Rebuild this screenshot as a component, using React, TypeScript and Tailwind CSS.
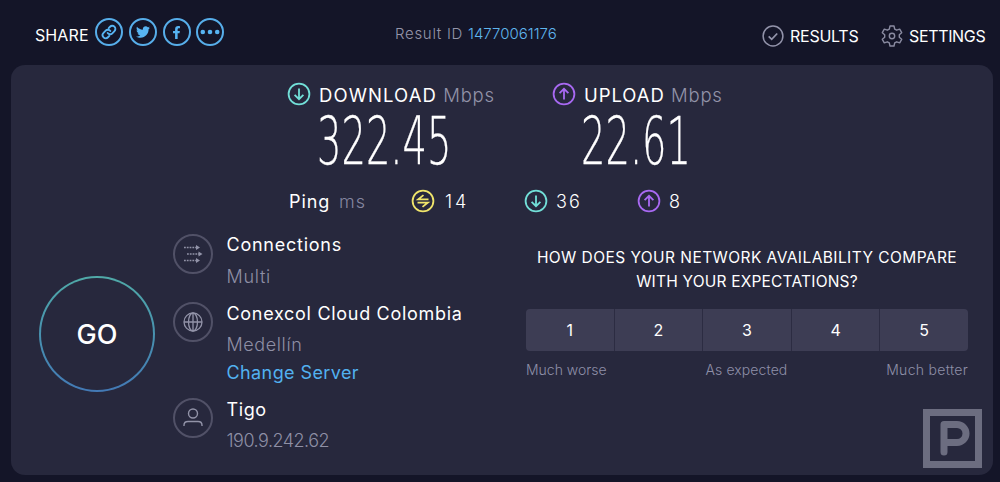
import React from 'react';
import { FaFacebookF, FaTwitter } from 'react-icons/fa';

const ratings = ['1', '2', '3', '4', '5'];

const ArrowBadge = ({ up, className }: { up?: boolean; className: string }) => (
  <svg className={`size-6 shrink-0 ${className}`} viewBox="0 0 24 24" fill="none" stroke="currentColor" strokeWidth="1.8">
    <circle cx="12" cy="12" r="10.4" />
    {up ? <path d="M12 17.5V7M7.6 11.2 12 6.8l4.4 4.4" /> : <path d="M12 6.5V17M7.6 12.8l4.4 4.4 4.4-4.4" />}
  </svg>
);

const PingBadge = () => (
  <svg className="size-6 shrink-0 text-[#f0e56b]" viewBox="0 0 24 24" fill="none" stroke="currentColor" strokeWidth="1.8">
    <circle cx="12" cy="12" r="10.4" />
    <path d="M17.5 10.3H7.2l5.3-4.2M6.5 13.7h10.3l-5.3 4.2" />
  </svg>
);

const ShareCircle = ({ children }: { children: React.ReactNode }) => (
  <a className="flex size-7 items-center justify-center rounded-full border-2 border-[#57aeea] text-[#57b4f2]">{children}</a>
);

const InfoCircle = ({ children }: { children: React.ReactNode }) => (
  <div className="flex size-10 shrink-0 items-center justify-center rounded-full border-2 border-[#515167] text-[#9293a8]">
    {children}
  </div>
);

const Header = () => (
  <header className="flex h-[65px] items-start whitespace-nowrap">
    <div className="flex w-[395px] pl-[35px]">
      <span className="mt-[23px] w-[60px] text-base leading-6 tracking-[0.1px]">SHARE</span>
      <div className="mt-[18px] flex gap-[5.8px]">
        <ShareCircle>
          <svg className="size-4 shrink-0" viewBox="0 0 24 24" fill="none" stroke="currentColor" strokeWidth="2.8" strokeLinecap="round">
            <path d="M10 13.5a4.6 4.6 0 0 0 7 .5l3.2-3.3a4.7 4.7 0 0 0-6.7-6.6l-2 2" />
            <path d="M14 10.5a4.6 4.6 0 0 0-7-.5l-3.2 3.3a4.7 4.7 0 0 0 6.7 6.6l2-2" />
          </svg>
        </ShareCircle>
        <ShareCircle>
          <FaTwitter className="size-[14px]" />
        </ShareCircle>
        <ShareCircle>
          <FaFacebookF className="size-[13px]" />
        </ShareCircle>
        <ShareCircle>
          <svg className="h-2 w-5 shrink-0" viewBox="0 0 20 8" fill="currentColor">
            <circle cx="2.8" cy="4" r="2.3" />
            <circle cx="10" cy="4" r="2.3" />
            <circle cx="17.2" cy="4" r="2.3" />
          </svg>
        </ShareCircle>
      </div>
    </div>
    <div className="mt-[22px] w-[367px] text-[15px] leading-6 font-light text-[#9495aa]">
      <span className="tracking-[0.7px]">Result ID </span>
      <span className="text-[#5fb5ee]">14770061176</span>
    </div>
    <div className="mt-6 flex w-[119px] items-center gap-[6px]">
      <svg className="size-[22px]" viewBox="0 0 22 22" fill="none" stroke="#9293aa" strokeWidth="1.5">
        <circle cx="11" cy="11" r="9.9" />
        <path d="m6.7 11.3 3 3 5.5-5.8" strokeWidth="1.8" />
      </svg>
      <span className="text-base leading-6 tracking-[-0.25px]">RESULTS</span>
    </div>
    <div className="mt-6 flex items-center gap-[6px]">
      <svg className="size-[22px]" viewBox="0 0 22 22" fill="none" stroke="#8a8ba1" strokeWidth="1.4" strokeLinejoin="round">
        <path d="M9 1h4l.7 3.1 2 1.1 3-1 2 3.5-2.4 2.1v2.4l2.4 2.1-2 3.5-3-1-2 1.1L13 21H9l-.7-3.1-2-1.1-3 1-2-3.5 2.4-2.1V9.8L1.3 7.7l2-3.5 3 1 2-1.1z" />
        <circle cx="11" cy="11" r="2.7" />
      </svg>
      <span className="text-base leading-6 tracking-[-0.35px]">SETTINGS</span>
    </div>
  </header>
);

const Speeds = () => (
  <>
    <div className="flex h-6 items-center pl-[276px] text-[18.5px] leading-6">
      <div className="flex w-[265px] items-center gap-2">
        <ArrowBadge className="text-[#72dfd8]" />
        <span className="pt-px tracking-[1.1px]">
          DOWNLOAD <span className="font-light tracking-[0.7px] text-[#9293a8]">Mbps</span>
        </span>
      </div>
      <div className="flex items-center gap-2">
        <ArrowBadge up className="text-[#a869f2]" />
        <span className="pt-px tracking-[0.95px]">
          UPLOAD <span className="font-light tracking-[0.8px] text-[#9293a8]">Mbps</span>
        </span>
      </div>
    </div>
    <div className="flex h-[69px] pt-[2px] pl-[306px] font-['DejaVu_Sans'] text-[66px] leading-[67px] font-extralight [-webkit-text-stroke:0.3px_white]">
      <div className="w-[264px]">
        <span className="block origin-left scale-x-[0.582]">322.45</span>
      </div>
      <div>
        <span className="block origin-left scale-x-[0.582]">22.61</span>
      </div>
    </div>
    <div className="mt-[14px] flex h-6 items-center pl-[278px] text-lg leading-6">
      <span className="w-[50px] pt-px tracking-[0.9px]">Ping</span>
      <span className="w-[72px] pt-px font-light tracking-[1px] text-[#8586a0]">ms</span>
      <div className="flex w-[113px] items-center gap-[10px]">
        <PingBadge />
        <span className="pt-px font-light tracking-[3px]">14</span>
      </div>
      <div className="flex w-[113px] items-center gap-2">
        <ArrowBadge className="text-[#72dfd8]" />
        <span className="pt-px font-light tracking-[2px]">36</span>
      </div>
      <div className="flex items-center gap-2">
        <ArrowBadge up className="text-[#a869f2]" />
        <span className="pt-px font-light">8</span>
      </div>
    </div>
  </>
);

const ServerInfo = () => (
  <div className="mt-[21px] w-[353.5px] text-lg leading-[22px] whitespace-nowrap">
    <div className="flex h-[68px] gap-[14px]">
      <InfoCircle>
        <svg className="size-5 shrink-0" viewBox="0 0 20 20" fill="none" stroke="currentColor" strokeWidth="1.3">
          <path d="M1 3.5h12M4 10h12M1 16.5h12" strokeDasharray="1.8 1" />
          <path d="M13 1v5l4-2.5zM15.5 7.5v5l4-2.5zM13 14v5l4-2.5z" fill="currentColor" stroke="none" />
        </svg>
      </InfoCircle>
      <div>
        <p className="tracking-[0.75px]">Connections</p>
        <p className="mt-[10px] font-light tracking-[0.7px] text-[#8e8fa5]">Multi</p>
      </div>
    </div>
    <div className="flex h-24 gap-[14px]">
      <InfoCircle>
        <svg className="size-5 shrink-0" viewBox="0 0 20 20" fill="none" stroke="currentColor" strokeWidth="1.3">
          <circle cx="10" cy="10" r="9" />
          <ellipse cx="10" cy="10" rx="4.5" ry="9" />
          <path d="M1 10h18M10 1v18" />
        </svg>
      </InfoCircle>
      <div className="pt-px">
        <p className="tracking-[0.7px]">Conexcol Cloud Colombia</p>
        <p className="mt-[9px] font-light tracking-[0.6px] text-[#8e8fa5]">Medellín</p>
        <p className="mt-[6px] tracking-[0.4px] text-[#52b1f0]">Change Server</p>
      </div>
    </div>
    <div className="flex gap-[14px]">
      <InfoCircle>
        <svg className="size-5 shrink-0" viewBox="0 0 20 20" fill="none" stroke="currentColor" strokeWidth="1.4">
          <circle cx="10" cy="5.5" r="4.5" />
          <path d="M1 18v-.8c0-2.400 1.800-3.700 4-3.700h10c2.200 0 4 1.300 4 3.700v.8" />
        </svg>
      </InfoCircle>
      <div className="pt-px">
        <p className="tracking-[0.6px]">Tigo</p>
        <p className="mt-[9px] font-light tracking-[-0.5px] text-[#8e8fa5]">190.9.242.62</p>
      </div>
    </div>
  </div>
);

const Survey = () => (
  <div className="mt-[33px] w-[442px]">
    <h2 className="text-center text-[15.5px] leading-6 tracking-[0.43px] whitespace-nowrap">
      HOW DOES YOUR NETWORK AVAILABILITY COMPARE
      <br />
      <span className="tracking-[0.2px]">WITH YOUR EXPECTATIONS?</span>
    </h2>
    <div className="mt-[15px] grid h-[42px] grid-cols-5 gap-px overflow-hidden rounded bg-[#2c2c42]">
      {ratings.map((rating) => (
        <button key={rating} className="bg-[#3d3d54] text-base">
          {rating}
        </button>
      ))}
    </div>
    <div className="mt-[9px] flex justify-between text-sm leading-5 font-light text-[#8e8fa8]">
      <span>Much worse</span>
      <span className="tracking-[0.1px]">As expected</span>
      <span className="tracking-[0.3px]">Much better</span>
    </div>
  </div>
);

const App = () => {
  return (
    <div className="h-[482px] w-[1000px] overflow-hidden bg-[#141528] font-['Inter',sans-serif] text-white">
      <Header />
      <main className="relative ml-[11px] h-[410px] w-[982px] rounded-[14px] bg-[#27283d] pt-[17px]">
        <Speeds />
        <div className="flex items-start">
          <div className="mt-[63px] mr-[17.5px] ml-7 size-[116px] shrink-0 rounded-full bg-linear-to-b from-[#50aaa8] to-[#4379b5] p-[2px]">
            <button className="size-full rounded-full bg-[#27283d] pt-[2px] text-[27px] font-medium">GO</button>
          </div>
          <ServerInfo />
          <Survey />
        </div>
        <div className="absolute right-[11px] bottom-[7px] size-[59px] border-[7px] border-[#6c6d80]">
          <svg className="size-full" viewBox="0 0 45 45" fill="none" stroke="#6c6d80" strokeWidth="7" strokeLinecap="round" strokeLinejoin="round">
            <path d="M14 36V8.500h13a9 9 0 0 1 0 18H14" />
          </svg>
        </div>
      </main>
    </div>
  );
};

export default App;
